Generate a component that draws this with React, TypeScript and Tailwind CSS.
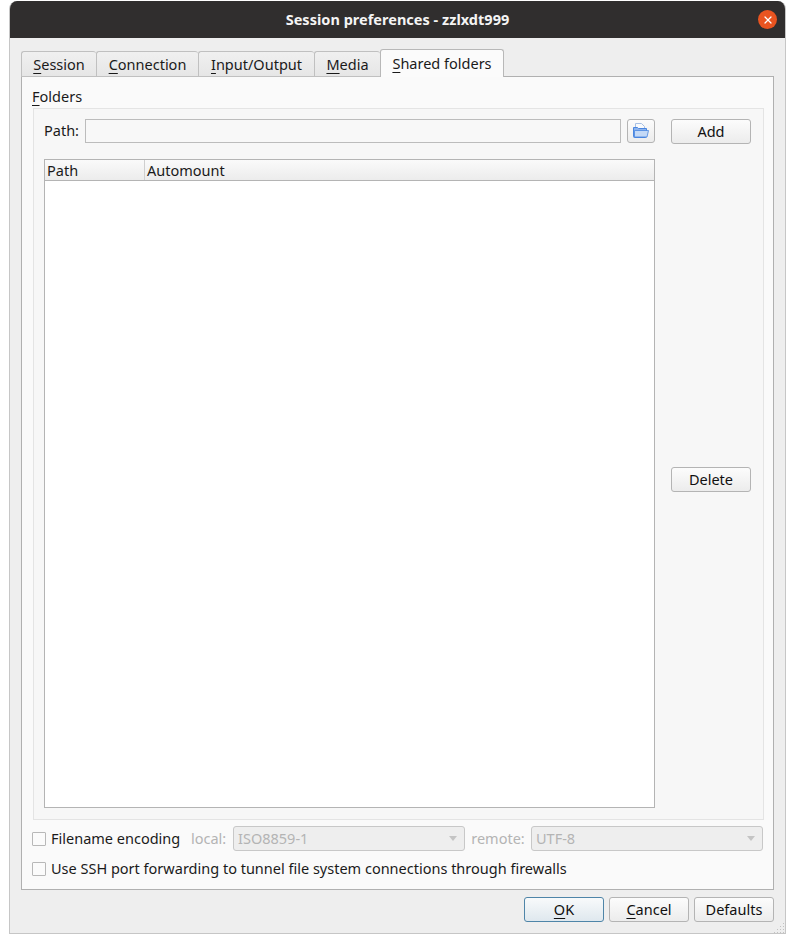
import type { ReactNode } from "react";
import { X } from "lucide-react";

const font = "font-['Noto_Sans','Open_Sans',sans-serif]";

const tabs = [
  { key: "S", rest: "ession", width: "w-[75px]" },
  { key: "C", rest: "onnection", width: "w-[102px]" },
  { key: "I", rest: "nput/Output", width: "w-[116px]" },
  { key: "M", rest: "edia", width: "w-[66px]" },
];

function Key({ children }: { children: ReactNode }) {
  return <span className="underline underline-offset-[3px] decoration-1">{children}</span>;
}

function PushButton({ children, primary }: { children: ReactNode; primary?: boolean }) {
  return (
    <button
      type="button"
      className={`flex h-[25px] w-[80px] items-center justify-center rounded-[3px] border text-[14.5px] leading-none text-[#101010] ${
        primary
          ? "border-[#4f85a8] bg-gradient-to-b from-[#f8fafb] to-[#dfe8ee]"
          : "border-[#b4b4b4] bg-gradient-to-b from-[#fcfcfc] to-[#ececec]"
      }`}
    >
      {children}
    </button>
  );
}

function CheckBox() {
  return <span className="h-[14px] w-[14px] shrink-0 rounded-[1px] border border-[#b8b8b8] bg-[#fbfbfb]" />;
}

function DisabledCombo({ value, className }: { value: string; className: string }) {
  return (
    <div
      className={`flex h-[25px] items-center justify-between rounded-[3px] border border-[#c8c8c8] bg-[#eeeeee] pl-[4px] pr-[7px] text-[14.5px] text-[#b4b4b4] ${className}`}
    >
      <span>{value}</span>
      <svg width="8" height="5" viewBox="0 0 8 5" aria-hidden="true">
        <path d="M0 0h8L4 5z" fill="#c4c4c4" />
      </svg>
    </div>
  );
}

function FolderIcon() {
  return (
    <svg width="16" height="16" viewBox="0 0 16 16" aria-hidden="true">
      <path d="M2.5 .5h6l3 3v4h-9z" fill="#f8fafd" stroke="#a8c0e4" />
      <path d="M.5 4.5h4l1 1h8v8a1 1 0 0 1-1 1h-11a1 1 0 0 1-1-1z" fill="#8db4ee" stroke="#4a86e0" />
      <path d="M1.5 7.5h14l-1.5 6.5H1.5z" fill="#c4d9f6" stroke="#4a86e0" strokeWidth=".8" />
    </svg>
  );
}

function ResizeGrip() {
  return (
    <svg className="absolute bottom-0 right-0" width="11" height="11" viewBox="0 0 11 11" aria-hidden="true">
      <path d="M9 1h1v1H9zM6 4h1v1H6zM9 4h1v1H9zM3 7h1v1H3zM6 7h1v1H6zM9 7h1v1H9zM0 10h1v1H0zM3 10h1v1H3zM6 10h1v1H6zM9 10h1v1H9z" fill="#c2c2c2" />
    </svg>
  );
}

export default function App() {
  return (
    <div className={`${font} h-[943px] w-[795px] bg-white pl-[9px] pt-px`}>
      <div className="relative flex h-[933px] w-[777px] flex-col overflow-hidden rounded-t-[8px] border-x border-b border-[#c6c6c6] bg-[#eeeeee]">
        <header className="grid h-[37px] shrink-0 grid-cols-[1fr_auto_1fr] items-center bg-[#302e2e]">
          <span />
          <h1 className="text-[14.5px] font-bold tracking-[0.02px] text-[#f4f4f4]">Session preferences - zzlxdt999</h1>
          <div className="flex justify-end pr-[8px]">
            <span className="flex h-[19px] w-[19px] items-center justify-center rounded-full bg-[#e95420]">
              <X size={12} strokeWidth={2.5} className="text-white" aria-hidden="true" />
            </span>
          </div>
        </header>

        <main className="flex min-h-0 flex-1 flex-col px-[11px] pt-[11px]">
          <nav className="z-10 -mb-px flex h-[28px] shrink-0 items-end text-[14.5px] text-[#1a1a1a]">
            {tabs.map((tab) => (
              <div
                key={tab.key}
                className={`flex h-[26px] ${tab.width} items-center justify-center rounded-t-[3px] border border-r-0 border-[#c0c0c0] bg-gradient-to-b from-[#f0f0f0] to-[#e6e6e6] pt-[2px]`}
              >
                <span>
                  <Key>{tab.key}</Key>
                  {tab.rest}
                </span>
              </div>
            ))}
            <div className="flex h-[28px] w-[124px] items-center justify-center rounded-t-[3px] border border-b-0 border-[#b8b8b8] bg-[#fbfbfb]">
              <span>
                <Key>S</Key>hared folders
              </span>
            </div>
          </nav>

          <section className="flex h-[814px] shrink-0 flex-col border border-[#b0b0b0] bg-[#fafafa] pl-[11px] pr-[9px] text-[14.5px] text-[#1a1a1a]">
            <div className="-ml-px h-[31px] pt-[8px] leading-[22px]">
              <Key>F</Key>olders
            </div>
            <div className="flex h-[712px] shrink-0 gap-[16px] border border-[#e4e4e4] bg-[#f7f7f7] pl-[10px] pr-[11px] pt-[10px]">
              <div className="flex w-[611px] shrink-0 flex-col">
                <div className="flex h-[24px] items-center">
                  <span className="w-[41px] shrink-0">Path:</span>
                  <div className="h-[24px] w-[536px] shrink-0 border border-[#bcbcbc] bg-[#f8f8f8]" />
                  <button
                    type="button"
                    className="ml-[6px] flex h-[24px] w-[28px] shrink-0 items-center justify-center rounded-[3px] border border-[#b4b4b4] bg-gradient-to-b from-[#fcfcfc] to-[#ececec]"
                  >
                    <FolderIcon />
                  </button>
                </div>
                <div className="mt-[16px] flex h-[649px] flex-col border border-[#b4b4b4] bg-white">
                  <div className="flex h-[21px] shrink-0 border-b border-[#b4b4b4] bg-gradient-to-b from-[#fafafa] to-[#ececec] leading-[21px]">
                    <span className="w-[100px] border-r border-[#cfcfcf] pl-[2px]">Path</span>
                    <span className="pl-[2px]">Automount</span>
                  </div>
                </div>
              </div>
              <div className="flex flex-col">
                <PushButton>Add</PushButton>
                <div className="mt-[323px]">
                  <PushButton>Delete</PushButton>
                </div>
              </div>
            </div>

            <div className="-ml-px mt-[6px] flex h-[25px] items-center">
              <CheckBox />
              <span className="ml-[5px] w-[140px] shrink-0">Filename encoding</span>
              <span className="w-[42px] shrink-0 text-[#b4b4b4]">local:</span>
              <DisabledCombo value="ISO8859-1" className="w-[232px] shrink-0" />
              <span className="w-[66px] shrink-0 text-center text-[#b4b4b4]">remote:</span>
              <DisabledCombo value="UTF-8" className="w-[232px] shrink-0" />
            </div>
            <label className="-ml-px mt-[6px] flex h-[24px] items-center">
              <CheckBox />
              <span className="ml-[5px]">Use SSH port forwarding to tunnel file system connections through firewalls</span>
            </label>
          </section>

          <footer className="mt-[7px] flex justify-end gap-[5px]">
            <PushButton primary>
              <span>
                <Key>O</Key>K
              </span>
            </PushButton>
            <PushButton>
              <span>
                <Key>C</Key>ancel
              </span>
            </PushButton>
            <PushButton>Defaults</PushButton>
          </footer>
        </main>
        <ResizeGrip />
      </div>
    </div>
  );
}
